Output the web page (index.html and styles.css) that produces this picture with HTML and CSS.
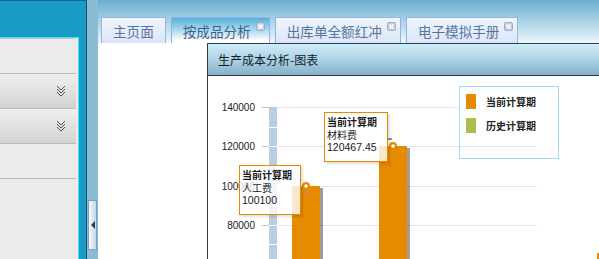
FILE: index.html
```html
<!DOCTYPE html>
<html lang="zh-CN">
<head>
  <meta charset="UTF-8" />
  <title>生产成本分析</title>
  <link rel="stylesheet" href="styles.css">
</head>
<body>
  <div class="app">
    <aside class="west">
      <div class="west-head"></div>
      <div class="west-body">
        <div class="nav-row first"></div>
        <div class="nav-row fold">
          <svg class="chev" width="10" height="12" viewBox="0 0 10 12">
            <polyline points="1,1 5,5 9,1" />
            <polyline points="1,4 5,8 9,4" />
            <polyline points="1,7 5,11 9,7" />
          </svg>
        </div>
        <div class="nav-row fold">
          <svg class="chev" width="10" height="12" viewBox="0 0 10 12">
            <polyline points="1,1 5,5 9,1" />
            <polyline points="1,4 5,8 9,4" />
            <polyline points="1,7 5,11 9,7" />
          </svg>
        </div>
        <div class="nav-row"></div>
      </div>
    </aside>

    <div class="splitter">
      <div class="collapse"><span class="arrow"></span></div>
    </div>

    <main class="center">
      <div class="tabbar">
        <div class="tab"><span>主页面</span></div>
        <div class="tab active closable"><span>按成品分析</span><svg class="tab-close" width="9" height="9" viewBox="0 0 9 9"><rect x="0.5" y="0.5" width="8" height="8" rx="1.5" /><path d="M2.5 2.5l4 4M6.5 2.5l-4 4" /></svg></div>
        <div class="tab closable"><span>出库单全额红冲</span><svg class="tab-close" width="9" height="9" viewBox="0 0 9 9"><rect x="0.5" y="0.5" width="8" height="8" rx="1.5" /><path d="M2.5 2.5l4 4M6.5 2.5l-4 4" /></svg></div>
        <div class="tab closable"><span>电子模拟手册</span><svg class="tab-close" width="9" height="9" viewBox="0 0 9 9"><rect x="0.5" y="0.5" width="8" height="8" rx="1.5" /><path d="M2.5 2.5l4 4M6.5 2.5l-4 4" /></svg></div>
      </div>

      <div class="content">
        <section class="panel">
          <div class="panel-head">生产成本分析-图表</div>
          <div class="chart">
            <svg class="plot" width="400" height="190" viewBox="0 0 400 190">
              <g class="grid">
                <line x1="69" y1="31.5" x2="251" y2="31.5" />
                <line x1="69" y1="70.5" x2="329" y2="70.5" />
                <line x1="69" y1="110.5" x2="329" y2="110.5" />
                <line x1="69" y1="149.5" x2="329" y2="149.5" />
              </g>
              <g class="ticks">
                <line x1="54" y1="31.5" x2="61" y2="31.5" />
                <line x1="54" y1="70.5" x2="61" y2="70.5" />
                <line x1="54" y1="110.5" x2="61" y2="110.5" />
                <line x1="54" y1="149.5" x2="61" y2="149.5" />
              </g>
              <rect class="band" x="61" y="31" width="8" height="160" />
              <g class="band-gaps">
                <line x1="61" y1="51.5" x2="69" y2="51.5" />
                <line x1="61" y1="70.5" x2="69" y2="70.5" />
                <line x1="61" y1="90.5" x2="69" y2="90.5" />
                <line x1="61" y1="110.5" x2="69" y2="110.5" />
                <line x1="61" y1="129.5" x2="69" y2="129.5" />
                <line x1="61" y1="149.5" x2="69" y2="149.5" />
                <line x1="61" y1="168.5" x2="69" y2="168.5" />
                <line x1="61" y1="188.5" x2="69" y2="188.5" />
              </g>
              <g class="labels">
                <text x="47" y="35">140000</text>
                <text x="47" y="74">120000</text>
                <text x="47" y="114">100000</text>
                <text x="47" y="153">80000</text>
              </g>

              <rect class="shadow" x="87" y="112" width="28" height="80" />
              <rect class="bar" x="84" y="110" width="28" height="80" />
              <rect class="shadow" x="174" y="72" width="28" height="120" />
              <rect class="bar" x="171" y="70" width="28" height="120" />
              <rect class="bar" x="389" y="177" width="2" height="13" />

              <rect class="pin" x="94" y="115" width="5" height="2" />
              <rect class="pin" x="180" y="62" width="4" height="2" />
              <circle class="dot" cx="98" cy="110" r="4" />
              <circle class="dot-in" cx="98" cy="110" r="1.8" />
              <circle class="dot" cx="185" cy="70" r="4" />
              <circle class="dot-in" cx="185" cy="70" r="1.8" />
            </svg>

            <div class="tip tip-labor">
              <b>当前计算期</b>
              <span>人工费</span>
              <span class="num">100100</span>
            </div>
            <div class="tip tip-material">
              <b>当前计算期</b>
              <span>材料费</span>
              <span class="num">120467.45</span>
            </div>

            <div class="legend">
              <div class="legend-item"><i class="swatch now"></i>当前计算期</div>
              <div class="legend-item"><i class="swatch past"></i>历史计算期</div>
            </div>
          </div>
        </section>
      </div>
    </main>
  </div>
</body>
</html>
```

FILE: styles.css
```css
* {
  box-sizing: border-box;
}

body {
  margin: 0;
  font-family: "Noto Sans CJK SC", sans-serif;
  background: #fff;
  overflow: hidden;
}

.app {
  display: flex;
  width: 599px;
  height: 259px;
}

/* left navigation */
.west {
  width: 87px;
  display: flex;
  flex-direction: column;
  background: #1a9bc6;
  border-top: 1px solid #1c5f82;
  border-right: 1px solid #21506b;
}

.west-head {
  height: 36px;
}

.west-body {
  flex: 1;
  margin-right: 7px;
  padding-right: 2px;
  background: #ebebeb;
  border-top: 1px solid #3ee6f6;
  border-right: 1px solid #3ee6f6;
}

.nav-row {
  height: 35px;
  border-bottom: 1px solid #b9b9b9;
  display: flex;
  align-items: center;
  justify-content: flex-end;
  padding-right: 10px;
}

.nav-row.first {
  height: 36px;
  border-top: 1px solid #c6c6c6;
}

.nav-row.fold {
  background: linear-gradient(#efefef, #d3d3d3);
}

.chev polyline {
  fill: none;
  stroke: #555;
  stroke-width: 1;
}

/* splitter */
.splitter {
  width: 11px;
  background: #8bbcd6;
}

.collapse {
  width: 9px;
  height: 50px;
  margin: 200px 0 0 1px;
  border: 1px solid #7aa0c8;
  border-bottom-color: #8d9fb2;
  background: linear-gradient(to right, #f6f9fc, #c6d7e9);
  display: flex;
  align-items: center;
  justify-content: center;
}

.arrow {
  width: 0;
  height: 0;
  border-top: 4px solid transparent;
  border-bottom: 4px solid transparent;
  border-right: 4px solid #1e3d5c;
}

/* main area */
.center {
  flex: 1;
  min-width: 0;
  display: flex;
  flex-direction: column;
}

.tabbar {
  height: 43px;
  display: flex;
  align-items: flex-end;
  gap: 5px;
  padding-left: 3px;
  background: linear-gradient(#6aadd1, #a4d0e5 45%, #eef6fa);
}

.tab {
  height: 26px;
  display: flex;
  align-items: flex-start;
  padding: 3px 11px 0 11px;
  font-size: 13.6px;
  line-height: 20px;
  color: #5774a0;
  background: linear-gradient(#f0f5fd, #dae6f8);
  border: 1px solid #8fb5e3;
  border-bottom: none;
  white-space: nowrap;
}

.tab.closable {
  padding-right: 4px;
}

.tab.active {
  color: #3f5d88;
  background: linear-gradient(#55b2da, #b9dff0 55%, #ffffff 90%);
}

.tab-close {
  margin: 1px 0 0 5px;
}

.tab-close rect {
  fill: #c4d0e1;
  stroke: #9cafc8;
}

.tab-close path {
  stroke: #fff;
  stroke-width: 1.4;
}

.content {
  flex: 1;
  background: #fff;
  overflow: hidden;
  padding-left: 109px;
}

.panel {
  width: 440px;
  height: 100%;
  display: flex;
  flex-direction: column;
  border-left: 1px solid #2b3d52;
  border-top: 1px solid #2b3d52;
}

.panel-head {
  height: 32px;
  padding-left: 10px;
  font-size: 12px;
  line-height: 31px;
  color: #121c28;
  background: linear-gradient(#d0ebf9, #aed2e6 50%, #86afc8);
  border-bottom: 1px solid #2b3d52;
}

/* chart */
.chart {
  position: relative;
  flex: 1;
}

.plot {
  display: block;
}

.grid line {
  stroke: #e5e5e5;
}

.ticks line {
  stroke: #b4c6d8;
}

.band {
  fill: #b9cde0;
}

.band-gaps line {
  stroke: #fff;
}

.labels text {
  font-family: "Liberation Sans", sans-serif;
  font-size: 10px;
  fill: #222;
  text-anchor: end;
}

.bar {
  fill: #e68a00;
}

.shadow {
  fill: rgba(40, 40, 40, 0.45);
}

.pin {
  fill: #8796a6;
}

.dot {
  fill: #e68a00;
}

.dot-in {
  fill: #fff;
}

.tip {
  position: absolute;
  display: flex;
  flex-direction: column;
  height: 50px;
  padding: 2px 2px 0 2px;
  font-size: 10px;
  line-height: 13px;
  color: #1a1a1a;
  background: rgba(255, 255, 255, 0.8);
  border: 1px solid #e68a00;
  box-shadow: 2px 2px 2px rgba(0, 0, 0, 0.12);
  white-space: nowrap;
}

.tip b {
  font-weight: bold;
}

.tip .num {
  font-family: "Liberation Sans", sans-serif;
  font-size: 10.5px;
}

.tip-labor {
  left: 31px;
  top: 89px;
  width: 62px;
}

.tip-material {
  left: 116px;
  top: 36px;
  width: 64px;
}

.legend {
  position: absolute;
  left: 251px;
  top: 10px;
  width: 100px;
  height: 73px;
  padding: 7px 0 0 6px;
  border: 1px solid #a4d7f5;
  display: flex;
  flex-direction: column;
  gap: 9px;
}

.legend-item {
  display: flex;
  align-items: center;
  gap: 10px;
  font-size: 10px;
  font-weight: bold;
  color: #222;
  line-height: 15px;
}

.swatch {
  display: block;
  width: 10px;
  height: 15px;
}

.swatch.now {
  background: #e68a00;
}

.swatch.past {
  background: #a6bf4e;
}
```
